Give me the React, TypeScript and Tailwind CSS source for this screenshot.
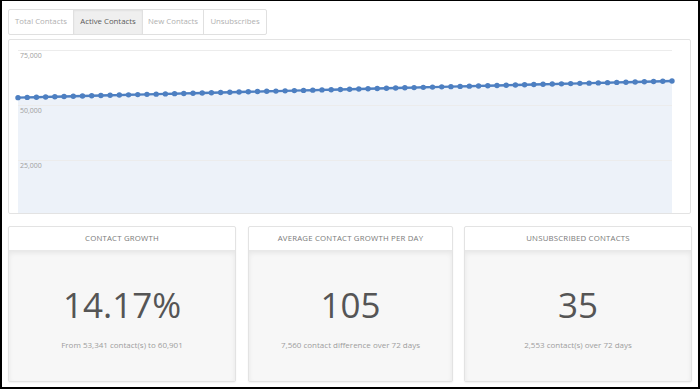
import React from "react";

const W = 682;
const H = 174;
const x0 = 9;
const x1 = 663;
const N = 72;
const start = 53341;
const end = 60901;
const yOf = (v: number) => 175 - (v / 25000) * 55;

const pts = Array.from({ length: N }, (_, i) => {
  const t = i / (N - 1);
  const v = start + (end - start) * t;
  return [x0 + (x1 - x0) * t, yOf(v)] as [number, number];
});

function Chart() {
  const line = pts.map((p, i) => `${i ? "L" : "M"}${p[0].toFixed(1)},${p[1].toFixed(1)}`).join(" ");
  const area = `${line} L${x1},${H} L${x0},${H} Z`;
  return (
    <svg width={W} height={H} viewBox={`0 0 ${W} ${H}`} className="block">
      <path d={area} fill="#edf2f9" />
      {[10, 65, 120].map((y) => (
        <line key={y} x1={x0} x2={x1} y1={y + 0.5} y2={y + 0.5} stroke="#ececec" strokeWidth={1} />
      ))}
      {[
        [10, "75,000"],
        [65, "50,000"],
        [120, "25,000"],
      ].map(([y, t]) => (
        <text key={t as string} x={11} y={(y as number) + 8} fontSize={7} fill="#a0a0a0" fontFamily="'Open Sans', sans-serif">
          {t}
        </text>
      ))}
      <path d={line} fill="none" stroke="#4d7fc1" strokeWidth={2.4} />
      {pts.map((p, i) => (
        <circle key={i} cx={p[0]} cy={p[1]} r={2.7} fill="#4d7fc1" />
      ))}
    </svg>
  );
}

function Card({ title, value, sub, w }: { title: string; value: string; sub: string; w: string }) {
  return (
    <div className={`${w} flex flex-col rounded-[2px] border border-[#e3e3e3] bg-white shadow-[0_1px_2px_rgba(0,0,0,0.06)] overflow-hidden`}>
      <div className="h-[23px] flex items-center justify-center text-[7.8px] tracking-[0.2px] text-[#7a7a7a] uppercase">
        {title}
      </div>
      <div className="h-[131px] bg-[#f7f7f7] shadow-[inset_0_3px_5px_rgba(0,0,0,0.07)] flex flex-col items-center">
        <div className="mt-[33px] text-[35px] leading-[44px] text-[#555]">{value}</div>
        <div className="mt-[12px] text-[8px] text-[#9d9d9d]">{sub}</div>
      </div>
    </div>
  );
}

export default function App() {
  const tabs = ["Total Contacts", "Active Contacts", "New Contacts", "Unsubscribes"];
  const widths = ["w-[64px]", "w-[69px]", "w-[61px]", "w-[63px]"];
  return (
    <div
      className="w-[700px] h-[389px] bg-white border-black border-t border-l-2 border-r-2 border-b-2 overflow-hidden"
      style={{ fontFamily: "'Open Sans', sans-serif" }}
    >
      <div className="pl-[6px] pt-[8px]">
        <div className="flex h-[26px] w-fit rounded-[2px] border border-[#e0e0e0]">
          {tabs.map((t, i) => (
            <div
              key={t}
              className={`${widths[i]} flex items-center justify-center text-[7.8px] ${i > 0 ? "border-l border-[#e0e0e0]" : ""} ${
                i === 1 ? "bg-[#efefef] text-[#5a5a5a] shadow-[inset_0_1px_2px_rgba(0,0,0,0.06)]" : "text-[#b0b0b0]"
              }`}
            >
              {t}
            </div>
          ))}
        </div>
        <div className="mt-[4px] w-[683px] h-[175px] rounded-[2px] border border-[#e3e3e3] overflow-hidden">
          <Chart />
        </div>
        <div className="mt-[12px] flex">
          <Card w="w-[228px]" title="Contact Growth" value="14.17%" sub="From 53,341 contact(s) to 60,901" />
          <div className="w-[12px]" />
          <Card w="w-[205px]" title="Average Contact Growth Per Day" value="105" sub="7,560 contact difference over 72 days" />
          <div className="w-[11px]" />
          <Card w="w-[228px]" title="Unsubscribed Contacts" value="35" sub="2,553 contact(s) over 72 days" />
        </div>
      </div>
    </div>
  );
}
